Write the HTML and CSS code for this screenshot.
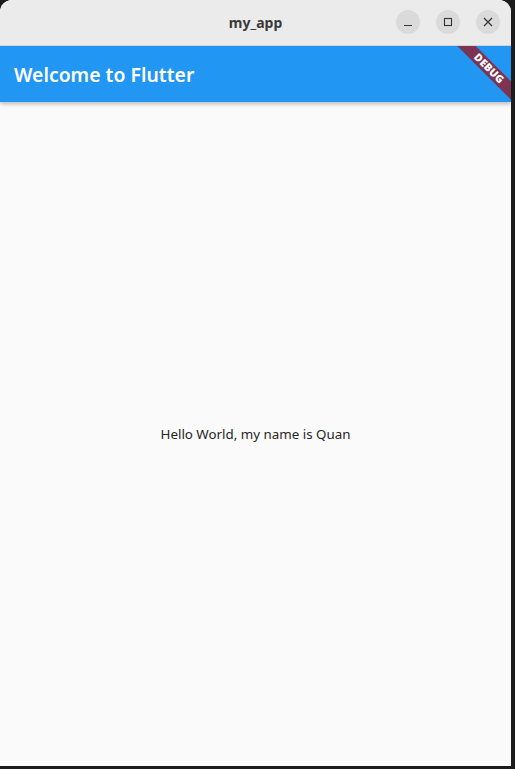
FILE: index.html
```html
<!DOCTYPE html>
<html>
<head>
<meta charset="utf-8">
<link rel="stylesheet" href="styles.css">
</head>
<body>
<div class="window">
  <div class="titlebar">
    <div class="title">my_app</div>
    <div class="controls">
      <span class="btn"><svg width="10" height="10" viewBox="0 0 10 10"><path d="M1 8.5H9" stroke="#333" stroke-width="1.2"/></svg></span>
      <span class="btn"><svg width="10" height="10" viewBox="0 0 10 10"><rect x="1.5" y="1.5" width="7" height="7" fill="none" stroke="#333" stroke-width="1.1"/></svg></span>
      <span class="btn"><svg width="10" height="10" viewBox="0 0 10 10"><path d="M1 1L9 9M9 1L1 9" stroke="#333" stroke-width="1.2"/></svg></span>
    </div>
  </div>
  <div class="app">
    <header class="appbar">Welcome to Flutter</header>
    <main class="content">Hello World, my name is Quan</main>
    <div class="banner">DEBUG</div>
  </div>
</div>
</body>
</html>
```
FILE: styles.css
```css
html, body {
  margin: 0;
  padding: 0;
  background: #1c1c1c;
  width: 515px;
  height: 769px;
  overflow: hidden;
}
.window {
  width: 511px;
  height: 766px;
  display: flex;
  flex-direction: column;
  border-radius: 12px 12px 0 0;
  overflow: hidden;
  background: #fafafa;
  font-family: "Noto Sans", "DejaVu Sans", sans-serif;
}
.titlebar {
  height: 45px;
  flex: none;
  background: #ebebeb;
  border-bottom: 1px solid #d2d2d2;
  display: flex;
  align-items: center;
  justify-content: center;
  position: relative;
}
.title {
  font-weight: 700;
  font-size: 14px;
  color: #3a3a3a;
  margin-top: -1px;
}
.controls {
  position: absolute;
  right: 11px;
  top: 10px;
  display: flex;
  gap: 16px;
}
.btn {
  width: 24px;
  height: 24px;
  border-radius: 50%;
  background: #dadada;
  display: flex;
  align-items: center;
  justify-content: center;
}
.app {
  flex: 1;
  display: flex;
  flex-direction: column;
  position: relative;
  overflow: hidden;
}
.appbar {
  height: 56px;
  flex: none;
  background: #2196f3;
  color: #fff;
  font-size: 19.4px;
  font-weight: 600;
  display: flex;
  align-items: center;
  padding-left: 14px;
  box-shadow: 0 2px 4px rgba(0,0,0,0.25);
  position: relative;
  z-index: 1;
}
.content {
  flex: 1;
  display: flex;
  align-items: center;
  justify-content: center;
  font-size: 13.35px;
  color: #262626;
}
.banner {
  position: absolute;
  z-index: 2;
  width: 120px;
  height: 13px;
  top: 15.75px;
  right: -37.75px;
  transform: rotate(45deg);
  background: #7c3452;
  color: #fff;
  font-size: 10.5px;
  font-weight: 900;
  line-height: 13px;
  text-align: center;
  letter-spacing: 0.2px;
}
```
